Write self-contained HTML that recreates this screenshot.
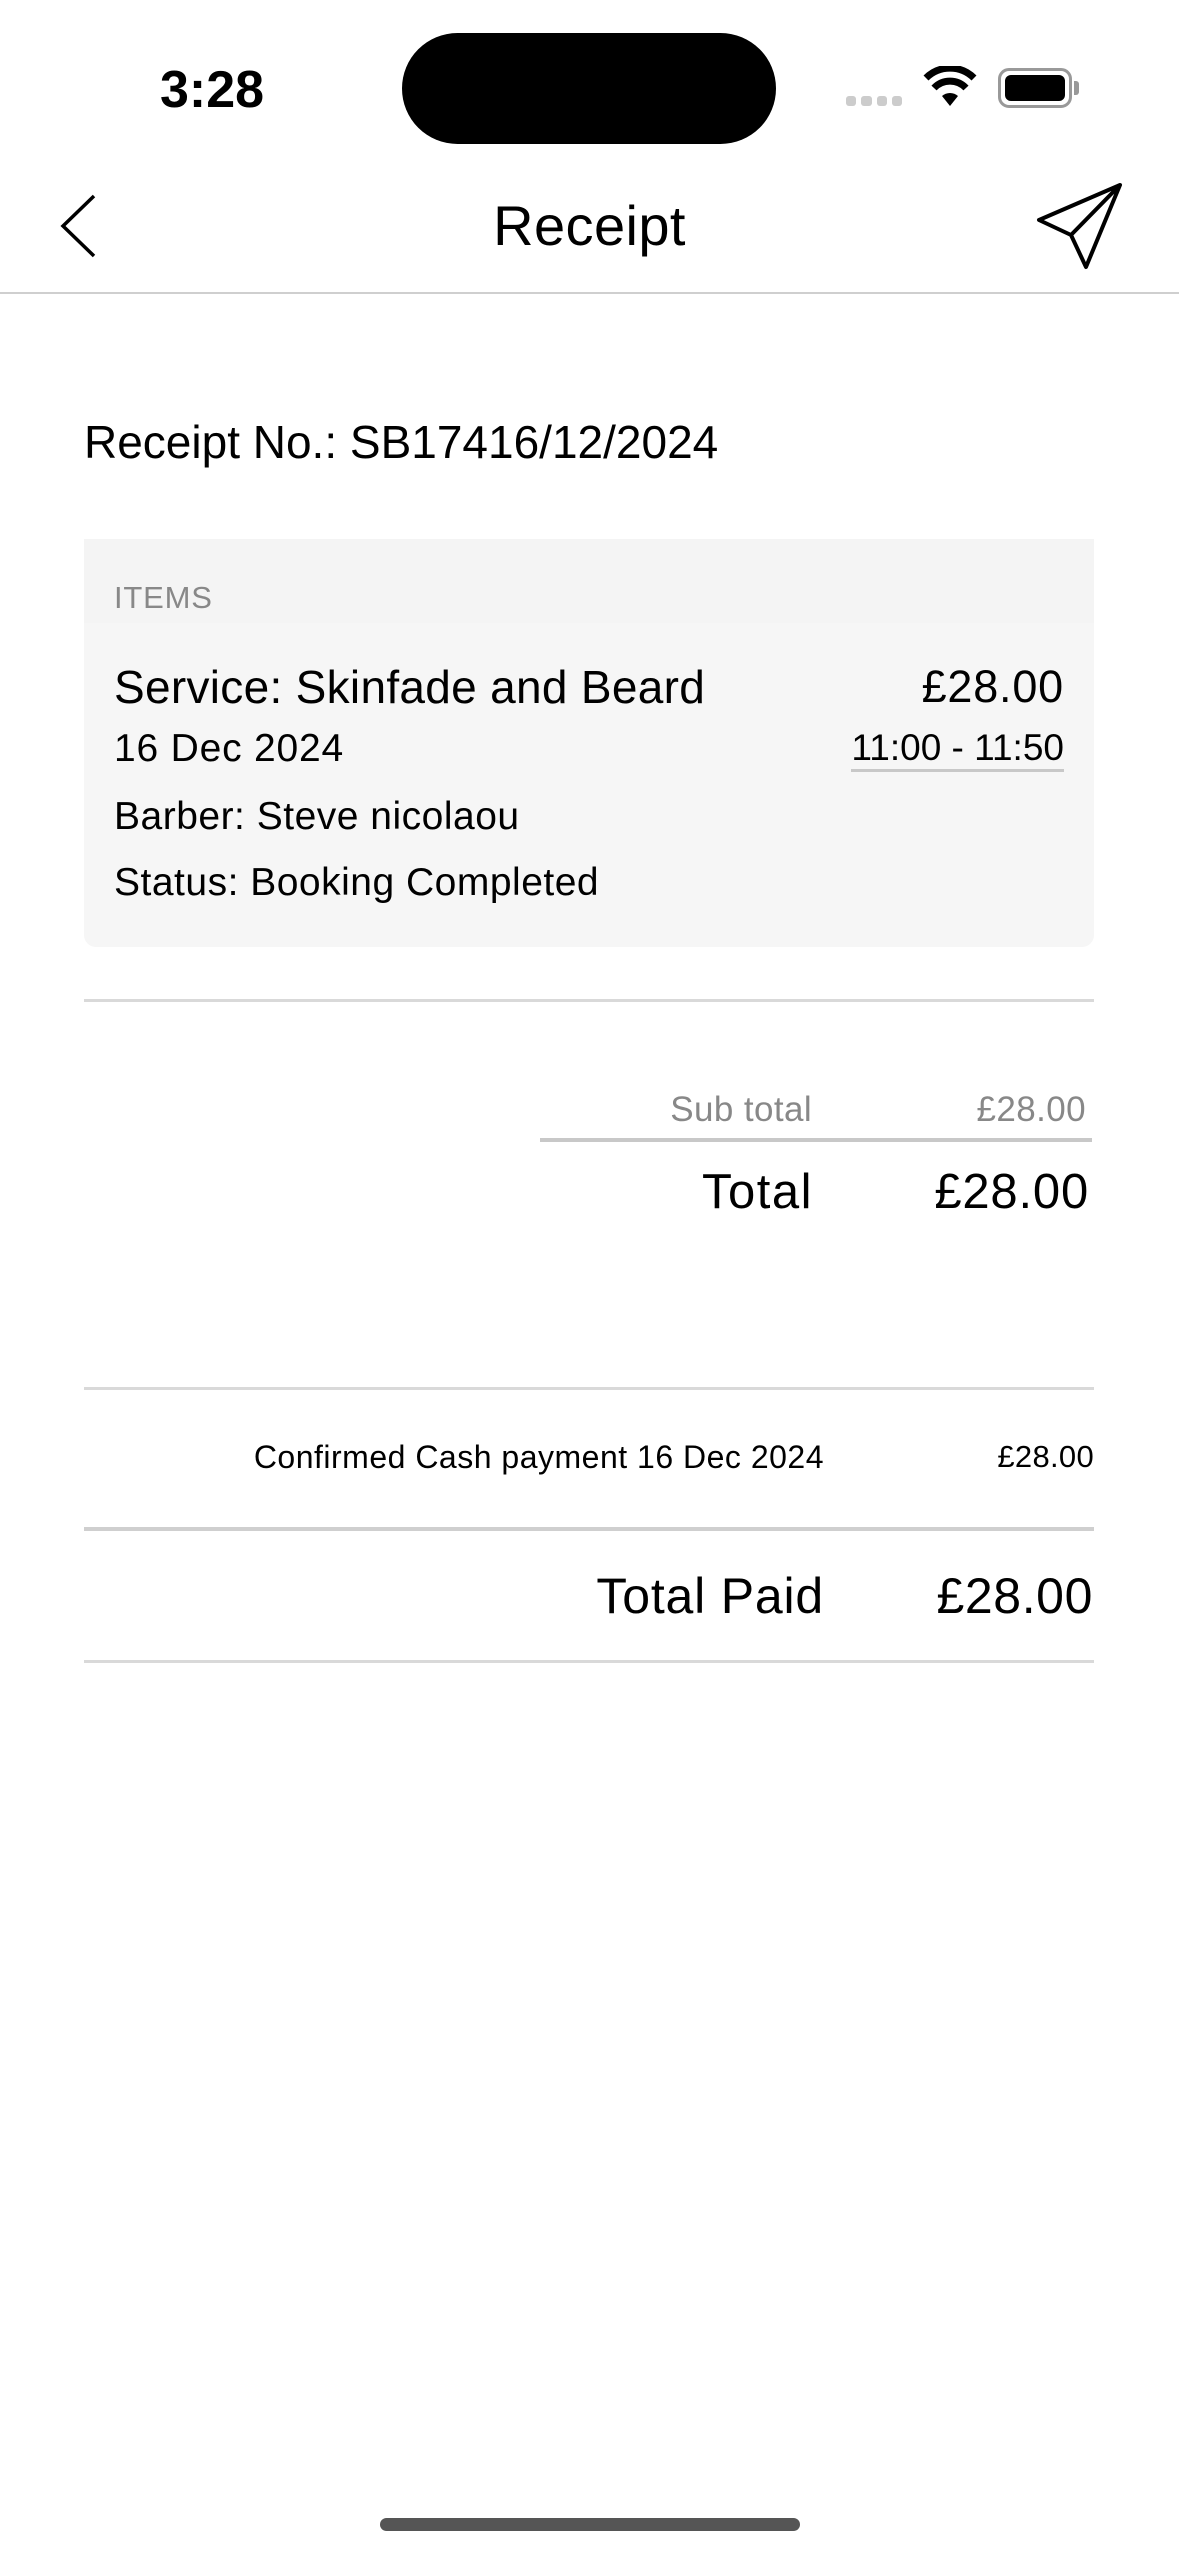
<!DOCTYPE html>
<html><head><meta charset="utf-8"><style>
*{margin:0;padding:0;box-sizing:border-box}
body{width:1179px;height:2556px;background:#fff;position:relative;overflow:hidden;font-family:"Liberation Sans",sans-serif;color:#000}
.t{position:absolute;white-space:nowrap;line-height:1;letter-spacing:0.8px}
.r{text-align:right}
.ln{position:absolute;height:3px;background:#d9d9d9}
</style></head><body>
<div class="t" style="left:160px;top:64px;font-size:52px;font-weight:700;letter-spacing:0">3:28</div>
<div style="position:absolute;left:402px;top:33px;width:374px;height:111px;background:#000;border-radius:56px"></div>
<div style="position:absolute;left:846px;top:96px;width:56px;height:10px;display:flex;gap:5px">
<i style="flex:1;background:#ccc;border-radius:3px"></i><i style="flex:1;background:#ccc;border-radius:3px"></i><i style="flex:1;background:#ccc;border-radius:3px"></i><i style="flex:1;background:#ccc;border-radius:3px"></i></div>
<svg style="position:absolute;left:922px;top:66px" width="56" height="42" viewBox="0 0 56 42">
<path d="M28 40 L20 30 A12 12 0 0 1 36 30 Z" fill="#000"/>
<path d="M12 22 A22 22 0 0 1 44 22" stroke="#000" stroke-width="7" fill="none"/>
<path d="M4 12 A34 34 0 0 1 52 12" stroke="#000" stroke-width="7" fill="none"/>
</svg>
<div style="position:absolute;left:998px;top:68px;width:74px;height:40px;border:3px solid #999;border-radius:11px;padding:4px"><div style="width:100%;height:100%;background:#000;border-radius:6px"></div></div>
<div style="position:absolute;left:1074px;top:81px;width:5px;height:14px;background:#999;border-radius:0 3px 3px 0"></div>

<svg style="position:absolute;left:55px;top:190px" width="50" height="72" viewBox="0 0 50 72"><path d="M39 6 L8 36 L39 66" stroke="#000" stroke-width="3.5" fill="none"/></svg>
<div class="t" style="left:0;width:1179px;text-align:center;top:198px;font-size:56px;letter-spacing:0.4px">Receipt</div>
<svg style="position:absolute;left:1030px;top:178px" width="100" height="100" viewBox="1030 178 100 100"><path d="M1120 185 L1039 220 L1071 235 L1086 267 Z M1071 235 L1120 185" stroke="#000" stroke-width="4" stroke-linejoin="round" fill="none"/></svg>
<div class="ln" style="left:0;width:1179px;top:292px;height:2px;background:#cfcfcf"></div>

<div class="t" style="left:84px;top:419px;font-size:46px;font-weight:500;letter-spacing:0">Receipt No.: SB17416/12/2024</div>

<div style="position:absolute;left:84px;top:539px;width:1010px;height:408px;background:#f6f6f6;border-radius:12px"></div>
<div style="position:absolute;left:84px;top:539px;width:1010px;height:84px;background:#f4f4f4"></div>
<div class="t" style="left:114px;top:582px;font-size:31px;color:#888">ITEMS</div>
<div class="t" style="left:114px;top:664px;font-size:46px;font-weight:500;letter-spacing:0.3px">Service: Skinfade and Beard</div>
<div class="t r" style="right:115px;top:664px;font-size:45px;font-weight:500">£28.00</div>
<div class="t" style="left:114px;top:729px;font-size:39px">16 Dec 2024</div>
<div class="t r" style="right:115px;top:729px;font-size:37px;letter-spacing:0;padding-bottom:3px;border-bottom:3px solid #c8c8c8">11:00 - 11:50</div>
<div class="t" style="left:114px;top:797px;font-size:39px;letter-spacing:0.5px">Barber: Steve nicolaou</div>
<div class="t" style="left:114px;top:863px;font-size:39px;letter-spacing:0.5px">Status: Booking Completed</div>

<div class="ln" style="left:84px;width:1010px;top:999px"></div>
<div class="t r" style="right:367px;top:1092px;font-size:35px;color:#888;letter-spacing:0.4px">Sub total</div>
<div class="t r" style="right:93px;top:1092px;font-size:35px;color:#888;letter-spacing:0.4px">£28.00</div>
<div class="ln" style="left:540px;width:552px;top:1138px;height:4px;background:#c8c8c8"></div>
<div class="t r" style="right:366px;top:1168px;font-size:49px;font-weight:500;letter-spacing:1.5px">Total</div>
<div class="t r" style="right:90px;top:1168px;font-size:49px;font-weight:500;letter-spacing:0.8px">£28.00</div>

<div class="ln" style="left:84px;width:1010px;top:1387px"></div>
<div class="t r" style="right:355px;top:1441px;font-size:32px;letter-spacing:0.5px">Confirmed Cash payment 16 Dec 2024</div>
<div class="t r" style="right:85px;top:1441px;font-size:31px;letter-spacing:0.3px">£28.00</div>
<div class="ln" style="left:84px;width:1010px;top:1527px;height:4px;background:#cfcfcf"></div>
<div class="t r" style="right:355px;top:1571px;font-size:50px;font-weight:500;letter-spacing:0.8px">Total Paid</div>
<div class="t r" style="right:86px;top:1571px;font-size:50px;font-weight:500;letter-spacing:0.6px">£28.00</div>
<div class="ln" style="left:84px;width:1010px;top:1660px"></div>

<div style="position:absolute;left:380px;top:2518px;width:420px;height:13px;background:#555;border-radius:7px"></div>
</body></html>
